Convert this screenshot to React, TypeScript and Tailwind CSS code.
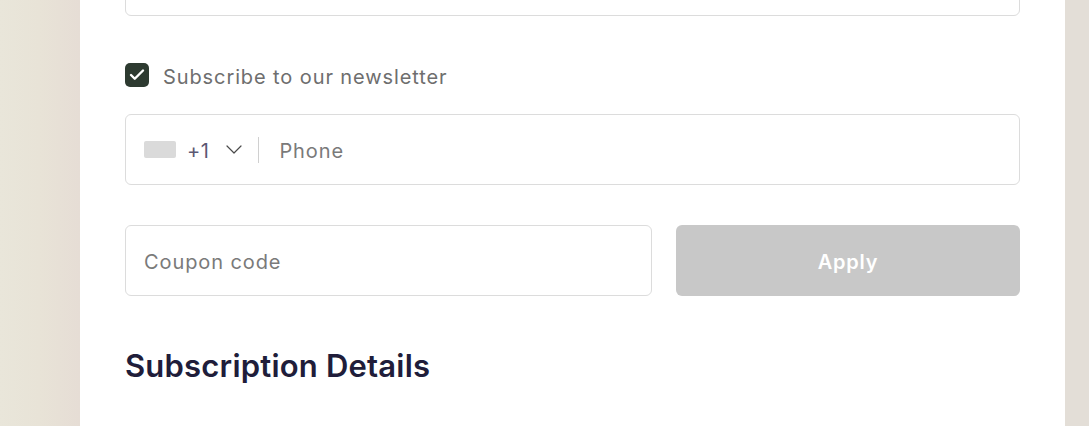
import { Check } from 'lucide-react';

const font = { fontFamily: 'Inter, "Noto Sans", sans-serif' };

export default function App() {
  return (
    <div className="flex h-[426px] w-full overflow-hidden" style={font}>
      <div className="w-[80px] shrink-0 bg-gradient-to-r from-[#e9e6da] via-[#e8e3d7] to-[#e6ddd5]" />

      <div className="w-[985px] shrink-0 bg-white px-[45px]">
        {/* previous field, mostly scrolled out of view */}
        <div className="-mt-[55px] h-[71px] rounded-md border border-[#dcdcdc] bg-white" />

        <label className="mt-[47px] flex h-[24px] items-center gap-[14px]">
          <span className="flex h-[24px] w-[24px] items-center justify-center rounded-[5px] bg-[#2d3a30]">
            <Check className="h-[18px] w-[18px] text-white" strokeWidth={3.2} />
          </span>
          <span className="pt-[4px] text-[20px] tracking-[0.9px] text-[#6e6e6e]">Subscribe to our newsletter</span>
        </label>

        <div className="mt-[27px] flex h-[71px] items-center rounded-md border border-[#dcdcdc] pl-[18px] pt-[3px]">
          <span className="-mt-[3px] h-[17px] w-[32px] rounded-[2px] bg-[#dadada]" />
          <span className="ml-[11px] text-[20px] tracking-[0.5px] text-[#5c5873]">+1</span>
          <svg className="ml-[17px] -mt-[3px]" width="16" height="9" viewBox="0 0 16 9" fill="none">
            <polyline points="1,1 8,8 15,1" stroke="#4a4a4a" strokeWidth="1.2" strokeLinecap="round" strokeLinejoin="round" />
          </svg>
          <span className="-mt-[3px] ml-[16px] h-[26px] w-px bg-[#d0d0d0]" />
          <span className="ml-[20px] text-[20px] tracking-[0.9px] text-[#7a7a7a]">Phone</span>
        </div>

        <div className="mt-[40px] flex gap-[24px]">
          <div className="flex h-[71px] flex-1 items-center rounded-md border border-[#dcdcdc] pl-[18px] pt-[3px]">
            <span className="text-[20px] tracking-[0.9px] text-[#7a7a7a]">Coupon code</span>
          </div>
          <button className="h-[71px] w-[344px] rounded-md bg-[#c8c8c8] pt-[2px] text-[20px] font-semibold tracking-[0.8px] text-white">
            Apply
          </button>
        </div>

        <h2 className="mt-[54px] text-[31px] font-semibold leading-none tracking-[0.2px] text-[#201d3a]">
          Subscription Details
        </h2>
      </div>

      <div className="flex-1 bg-[#e3ded7]" />
    </div>
  );
}
